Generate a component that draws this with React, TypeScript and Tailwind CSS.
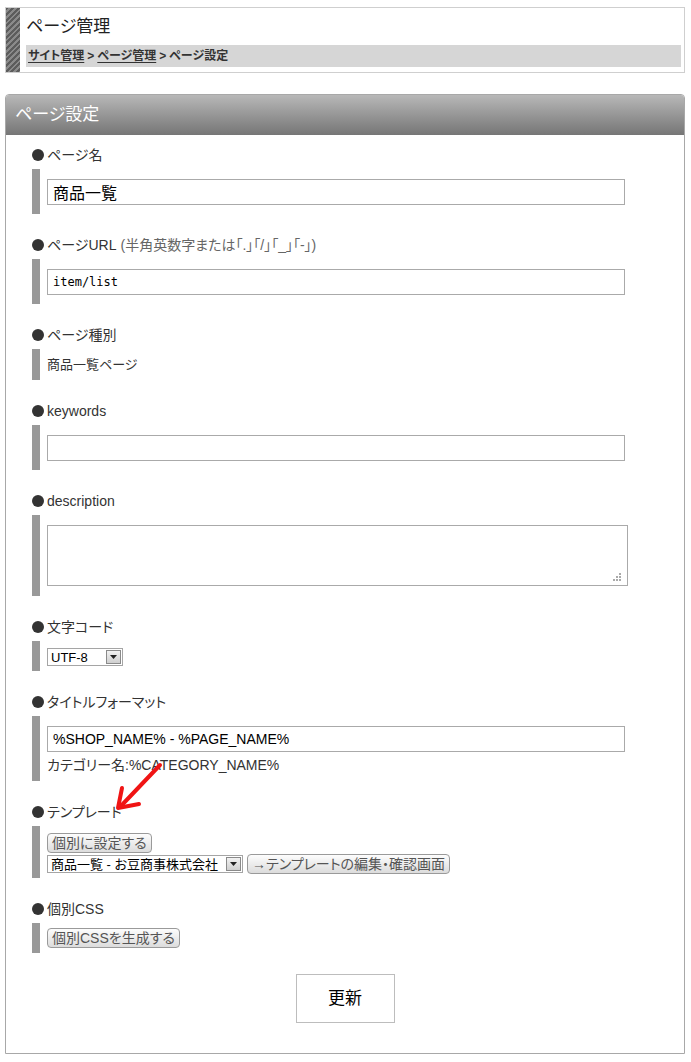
import type { ReactNode } from "react";

function Label({ children }: { children: ReactNode }) {
  return (
    <div className="flex h-5 items-center text-[14px] leading-5 text-[#333]">
      <span className="mr-[3px] inline-block h-3 w-3 shrink-0 rounded-full bg-[#333]" />
      {children}
    </div>
  );
}

function Field({ label, bar, children }: { label: ReactNode; bar: string; children: ReactNode }) {
  return (
    <div className="mt-[21px]">
      <Label>{label}</Label>
      <div className={bar}>{children}</div>
    </div>
  );
}

function FakeSelect({ value, width }: { value: string; width: string }) {
  return (
    <div className={`flex h-[18px] items-center border border-[#a5a5a5] bg-white ${width}`}>
      <span className="flex-1 truncate pl-[3px] text-[13px] leading-none text-black">{value}</span>
      <span className="mr-[1px] flex h-[14px] w-[15px] items-center justify-center border border-[#8a8a8a] bg-gradient-to-b from-[#f2f2f2] to-[#cfcfcf]">
        <svg width="7" height="4" viewBox="0 0 7 4">
          <path d="M0 0h7L3.5 4z" fill="#222" />
        </svg>
      </span>
    </div>
  );
}

function Btn({ children }: { children: ReactNode }) {
  return (
    <span className="flex h-[20px] items-center rounded-[4px] border border-[#9a9a9a] bg-gradient-to-b from-[#fdfdfd] to-[#dcdcdc] px-[4px] text-[14px] leading-none text-[#555]">
      {children}
    </span>
  );
}

const barBase = "mt-1 border-l-8 border-[#999] pl-[7px]";

export default function App() {
  return (
    <div className="relative min-h-[1062px] bg-white px-[5px] pt-[7px] pr-[6px] font-['Liberation_Sans','Noto_Sans_CJK_JP',sans-serif] [font-feature-settings:'palt']">
      {/* page heading */}
      <div className="flex h-[66px] border border-[#cfcfcf]">
        <div className="w-[14px] bg-[repeating-linear-gradient(135deg,#5c5c5c_0px,#5c5c5c_2px,#8a8a8a_2px,#8a8a8a_4px)]" />
        <div className="flex flex-1 flex-col pl-[6px] pr-[3px]">
          <div className="flex h-[37px] items-center pt-[1px] text-[17px] text-[#222]">ページ管理</div>
          <div className="flex h-[22px] items-center bg-[#d6d6d6] pl-[2px] text-[12px] font-bold text-[#333]">
            <span className="underline underline-offset-2">サイト管理</span>
            <span className="mx-[3px]">&gt;</span>
            <span className="underline underline-offset-2">ページ管理</span>
            <span className="mx-[3px]">&gt;</span>
            <span>ページ設定</span>
          </div>
        </div>
      </div>

      {/* settings panel */}
      <div className="mt-[21px] flex flex-col rounded-t-[4px] border border-[#a8a8a8]">
        <div className="flex h-[40px] items-center rounded-t-[3px] bg-gradient-to-b from-[#b8b8b8] to-[#767676] pl-[9px] text-[17px] text-white">
          ページ設定
        </div>
        <div className="flex flex-col pb-[30px] pl-[26px] pt-[10px]">
          <div>
            <Label>ページ名</Label>
            <div className={`${barBase} pt-[10px] pb-[9px]`}>
              <input readOnly value="商品一覧" className="block h-[26px] w-[578px] border border-[#aaa] px-[5px] text-[16px] text-black outline-none" />
            </div>
          </div>

          <Field
            label={
              <>
                ページURL<span className="ml-[4px] text-[#666]">(半角英数字または「.」「/」「_」「-」)</span>
              </>
            }
            bar={`${barBase} pt-[10px] pb-[9px]`}
          >
            <input readOnly value="item/list" className="block h-[26px] w-[578px] border border-[#aaa] px-[5px] font-['DejaVu_Sans_Mono',monospace] text-[12px] text-black outline-none" />
          </Field>

          <Field label="ページ種別" bar={`${barBase} py-[7px]`}>
            <div className="h-[17px] text-[13px] leading-[17px] text-[#333]">商品一覧ページ</div>
          </Field>

          <Field label="keywords" bar={`${barBase} pt-[10px] pb-[9px]`}>
            <input readOnly value="" className="block h-[26px] w-[578px] border border-[#aaa] px-[5px] text-[14px] outline-none" />
          </Field>

          <Field label="description" bar={`${barBase} pt-[10px] pb-[10px]`}>
            <div className="relative w-[581px]">
              <textarea readOnly value="" className="block h-[61px] w-[581px] resize-none border border-[#aaa] px-[5px] text-[14px] outline-none" />
              <svg className="absolute bottom-[5px] right-[7px]" width="8" height="8" viewBox="0 0 8 8">
                <g fill="#aaa">
                  <rect x="6" y="0" width="2" height="2" />
                  <rect x="3" y="3" width="2" height="2" />
                  <rect x="6" y="3" width="2" height="2" />
                  <rect x="0" y="6" width="2" height="2" />
                  <rect x="3" y="6" width="2" height="2" />
                  <rect x="6" y="6" width="2" height="2" />
                </g>
              </svg>
            </div>
          </Field>

          <Field label="文字コード" bar={`${barBase} pt-[7px] pb-[5px]`}>
            <FakeSelect value="UTF-8" width="w-[76px]" />
          </Field>

          <Field label="タイトルフォーマット" bar={`${barBase} pt-[10px] pb-[6px]`}>
            <input readOnly value="%SHOP_NAME% - %PAGE_NAME%" className="block h-[26px] w-[578px] border border-[#aaa] px-[5px] text-[14px] text-black outline-none" />
            <div className="mt-[3px] h-[20px] text-[14px] leading-[20px] text-[#333]">カテゴリー名:%CATEGORY_NAME%</div>
          </Field>

          <Field label="テンプレート" bar={`${barBase} flex flex-col items-start pt-[7px] pb-[4px]`}>
            <Btn>個別に設定する</Btn>
            <div className="mt-px flex items-center gap-[4px]">
              <FakeSelect value="商品一覧 - お豆商事株式会社" width="w-[196px]" />
              <Btn>→テンプレートの編集・確認画面</Btn>
            </div>
          </Field>

          <Field label="個別CSS" bar={`${barBase} flex items-start py-[5px]`}>
            <Btn>個別CSSを生成する</Btn>
          </Field>

          <div className="mt-[21px] flex justify-center pr-[26px]">
            <button className="flex h-[49px] w-[99px] items-center justify-center border border-[#bdbdbd] bg-white text-[17px] text-black">
              更新
            </button>
          </div>
        </div>
      </div>

      {/* red annotation arrow */}
      <svg className="pointer-events-none absolute left-[110px] top-[757px]" width="60" height="58" viewBox="0 0 60 58">
        <path d="M50 8 L10 50" stroke="#f01414" strokeWidth="4" strokeLinecap="round" fill="none" />
        <path d="M12 31 L8 51 L29 47" stroke="#f01414" strokeWidth="4" strokeLinecap="round" strokeLinejoin="round" fill="none" />
      </svg>
    </div>
  );
}
